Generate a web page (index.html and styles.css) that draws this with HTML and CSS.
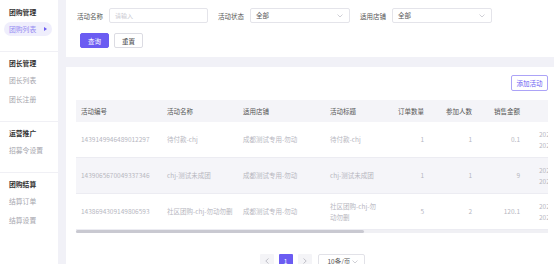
FILE: index.html
```html
<!DOCTYPE html>
<html lang="zh-CN">
<head>
  <meta charset="UTF-8" />
  <title>团购列表</title>
  <link rel="stylesheet" href="styles.css">
</head>
<body>
  <div class="layout">
    <div class="sidebar">
      <div class="menu-group">
        <div class="menu-title">团购管理</div>
        <div class="menu-item active">团购列表<span class="arrow"></span></div>
      </div>
      <div class="menu-group">
        <div class="menu-title">团长管理</div>
        <div class="menu-item">团长列表</div>
        <div class="menu-item">团长注册</div>
      </div>
      <div class="menu-group">
        <div class="menu-title">运营推广</div>
        <div class="menu-item">招募令设置</div>
      </div>
      <div class="menu-group last">
        <div class="menu-title">团购结算</div>
        <div class="menu-item">结算订单</div>
        <div class="menu-item">结算设置</div>
      </div>
    </div>

    <div class="main">
      <div class="card filter-card">
        <div class="filter-row">
          <div class="field">
            <span class="label">活动名称</span>
            <div class="input placeholder">请输入</div>
          </div>
          <div class="field">
            <span class="label">活动状态</span>
            <div class="input select">全部
              <svg class="chevron" width="6" height="4" viewBox="0 0 6 4"><polyline points="0.5,0.5 3,3 5.5,0.5" fill="none" stroke="#c4c4cc" stroke-width="0.8"/></svg>
            </div>
          </div>
          <div class="field">
            <span class="label">适用店铺</span>
            <div class="input select">全部
              <svg class="chevron" width="6" height="4" viewBox="0 0 6 4"><polyline points="0.5,0.5 3,3 5.5,0.5" fill="none" stroke="#c4c4cc" stroke-width="0.8"/></svg>
            </div>
          </div>
        </div>
        <div class="button-row">
          <button class="btn primary">查询</button>
          <button class="btn">重置</button>
        </div>
      </div>

      <div class="card list-card">
        <div class="toolbar">
          <button class="btn outline">添加活动</button>
        </div>
        <div class="table-wrap">
          <table class="table">
            <colgroup>
              <col style="width:86px"><col style="width:76px"><col style="width:87px"><col style="width:62px">
              <col style="width:49px"><col style="width:48px"><col style="width:48px"><col style="width:120px">
              <col style="width:90px"><col style="width:113px">
            </colgroup>
            <thead>
              <tr>
                <th>活动编号</th><th>活动名称</th><th>适用店铺</th><th>活动标题</th>
                <th class="num">订单数量</th><th class="num">参加人数</th><th class="num">销售金额</th>
                <th class="time-head">活动时间</th><th>活动状态</th><th>操作</th>
              </tr>
            </thead>
            <tbody>
              <tr>
                <td>1439149946489012297</td><td>待付款-chj</td><td>成都测试专用-勿动</td><td class="wrap">待付款-chj</td>
                <td class="num">1</td><td class="num">1</td><td class="num">0.1</td>
                <td class="time">2021-09-18 10:00:00<br>2021-09-30 23:59:59</td><td>进行中</td><td>查看</td>
              </tr>
              <tr class="hover">
                <td>1439065670049337346</td><td>chj-测试未成团</td><td>成都测试专用-勿动</td><td class="wrap">chj-测试未成团</td>
                <td class="num">1</td><td class="num">1</td><td class="num">9</td>
                <td class="time">2021-09-18 10:00:00<br>2021-09-30 23:59:59</td><td>进行中</td><td>查看</td>
              </tr>
              <tr>
                <td>1438694309149806593</td><td>社区团购-chj-勿动勿删</td><td>成都测试专用-勿动</td><td class="wrap">社区团购-chj-勿动勿删</td>
                <td class="num">5</td><td class="num">2</td><td class="num">120.1</td>
                <td class="time">2021-09-17 10:00:00<br>2021-09-30 23:59:59</td><td>进行中</td><td>查看</td>
              </tr>
            </tbody>
          </table>
        </div>
        <div class="hscroll"><div class="thumb"></div></div>

        <div class="pager">
          <span class="page-btn">
            <svg width="4" height="6" viewBox="0 0 4 6"><polyline points="3.5,0.5 0.8,3 3.5,5.5" fill="none" stroke="#b4b4bc" stroke-width="0.8"/></svg>
          </span>
          <span class="page-btn current">1</span>
          <span class="page-btn">
            <svg width="4" height="6" viewBox="0 0 4 6"><polyline points="0.5,0.5 3.2,3 0.5,5.5" fill="none" stroke="#b4b4bc" stroke-width="0.8"/></svg>
          </span>
          <span class="page-size">10条/页
            <svg class="chevron" width="6" height="4" viewBox="0 0 6 4"><polyline points="0.5,0.5 3,3 5.5,0.5" fill="none" stroke="#c4c4cc" stroke-width="0.8"/></svg>
          </span>
        </div>
      </div>
    </div>
  </div>
</body>
</html>
```

FILE: styles.css
```css
html, body {
  margin: 0;
  height: 100%;
  overflow: hidden;
}
body {
  background-color: #f1f1f7;
  font-family: "Noto Sans CJK SC", "Noto Sans", sans-serif;
  font-size: 6.5px;
  color: #555;
}
.layout {
  display: flex;
  min-height: 100vh;
}

/* sidebar */
.sidebar {
  width: 58px;
  flex-shrink: 0;
  background-color: #ffffff;
}
.menu-group {
  padding: 5px 0 15px 9px;
  border-bottom: 1px solid #f0f0f5;
}
.menu-group:first-child {
  padding-top: 6px;
}
.menu-group.last {
  border-bottom: none;
}
.menu-title {
  height: 12px;
  line-height: 12px;
  font-size: 6.8px;
  font-weight: bold;
  color: #333;
}
.menu-item {
  height: 14px;
  line-height: 14px;
  margin-top: 5px;
  font-size: 6.8px;
  color: #a5a5ad;
}
.menu-title + .menu-item {
  margin-top: 4px;
}
.menu-item.active {
  position: relative;
  margin-left: -5px;
  width: 48px;
  padding-left: 5px;
  box-sizing: border-box;
  border-radius: 7px;
  background-color: #efeefc;
  color: #968df2;
}
.arrow {
  position: absolute;
  right: 5px;
  top: 5px;
  border-left: 3px solid #6b5cf2;
  border-top: 2px solid transparent;
  border-bottom: 2px solid transparent;
}

/* main */
.main {
  flex: 1;
  min-width: 0;
  padding-left: 8px;
  display: flex;
  flex-direction: column;
  gap: 10px;
}
.card {
  background-color: #ffffff;
}
.filter-card {
  padding: 8px 10px 9px 11px;
}
.filter-row {
  display: flex;
  align-items: center;
  gap: 10px;
}
.field {
  display: flex;
  align-items: center;
  gap: 6px;
}
.label {
  color: #555;
  white-space: nowrap;
}
.input {
  position: relative;
  width: 99px;
  height: 15px;
  line-height: 13px;
  padding-left: 5px;
  box-sizing: border-box;
  border: 1px solid #e4e4ea;
  border-radius: 2px;
  color: #555;
}
.input.placeholder {
  color: #c8c8d0;
  font-size: 6px;
}
.input.select {
  width: 100px;
}
.chevron {
  position: absolute;
  right: 6px;
  top: 5px;
}
.button-row {
  display: flex;
  gap: 5px;
  margin-top: 10px;
  padding-left: 3px;
}
.btn {
  height: 15px;
  width: 29px;
  padding: 0;
  font-family: inherit;
  font-size: 6.5px;
  border: 1px solid #dcdce3;
  border-radius: 2px;
  background-color: #ffffff;
  color: #444;
}
.btn.primary {
  background-color: #6b5cf2;
  border-color: #6b5cf2;
  color: #ffffff;
}
.btn.outline {
  width: 37px;
  height: 16px;
  border-color: #aca3f7;
  color: #6b5cf2;
}

.list-card {
  flex: 1;
  padding: 8px 6px 0 10px;
}
.toolbar {
  display: flex;
  justify-content: flex-end;
}
.table-wrap {
  margin-top: 9px;
  overflow: hidden;
}
.table {
  width: 779px;
  table-layout: fixed;
  border-collapse: collapse;
}
.table th {
  height: 22px;
  padding: 0 5px;
  text-align: left;
  font-weight: normal;
  color: #555;
  background-color: #f4f4f8;
  white-space: nowrap;
}
.table td {
  height: 35px;
  padding: 0 5px;
  line-height: 11px;
  color: #b7b7bf;
  border-bottom: 1px solid #ececf2;
  white-space: nowrap;
  overflow: hidden;
}
.table td.wrap {
  white-space: normal;
}
.table tr.hover td {
  background-color: #f5f5f9;
}
.table .num {
  text-align: right;
  padding-right: 12px;
}
.table th.time-head {
  text-align: center;
}
.table .time {
  padding-left: 7px;
}
.hscroll {
  height: 3px;
  background-color: #f0f0f4;
}
.thumb {
  width: 61%;
  height: 3px;
  border-radius: 2px;
  background-color: #c9c9d1;
}

.pager {
  display: flex;
  justify-content: center;
  align-items: center;
  gap: 5px;
  margin-top: 21px;
}
.page-btn {
  display: flex;
  align-items: center;
  justify-content: center;
  width: 14px;
  height: 14px;
  border-radius: 1px;
  background-color: #f4f4f7;
  color: #ffffff;
}
.page-btn.current {
  background-color: #6b5cf2;
}
.page-size {
  position: relative;
  width: 47px;
  height: 14px;
  line-height: 12px;
  margin-left: 1px;
  padding-left: 9px;
  box-sizing: border-box;
  border: 1px solid #e2e2e8;
  border-radius: 2px;
  color: #555;
}
```
